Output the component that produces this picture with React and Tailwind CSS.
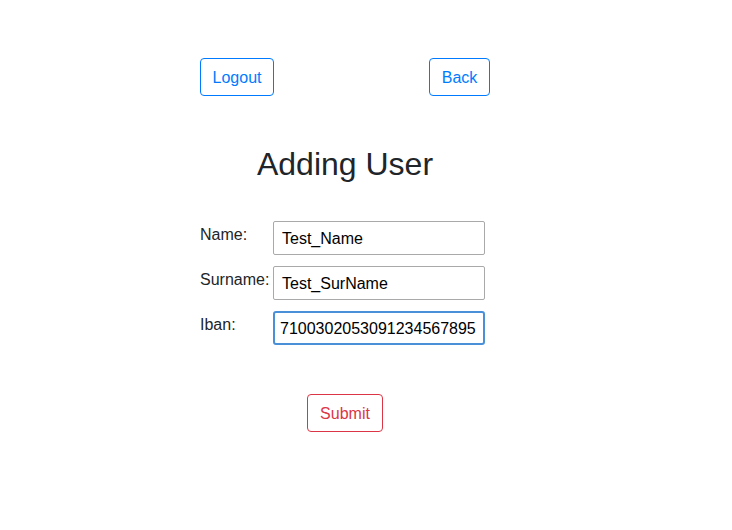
export default function App() {
    const rows = [
        { label: 'Name:', value: 'Test_Name' },
        { label: 'Surname:', value: 'Test_SurName' },
    ];

    return (
        <div className="min-h-[530px] bg-white pl-[200px] pt-[58px] text-[#212529]" style={{ fontFamily: '"Liberation Sans", Arial, sans-serif' }}>
            <div className="w-[290px]">

                {/* Top buttons */}
                <div className="flex justify-between">
                    <button className="w-[74px] h-[38px] pt-[2px] border border-[#007bff] rounded text-base text-[#007bff]">
                        Logout
                    </button>
                    <button className="w-[61px] h-[38px] pt-[2px] border border-[#007bff] rounded text-base text-[#007bff]">
                        Back
                    </button>
                </div>

                {/* Title */}
                <h2 className="mt-[49px] text-center text-[32px] leading-[1.2] font-normal">Adding User</h2>

                {/* Form */}
                <form className="mt-[38px] flex flex-col gap-[11px]">
                    {rows.map((row) => (
                        <div key={row.label} className="flex items-start">
                            <label className="w-[73px] pt-[2px] text-base leading-6">{row.label}</label>
                            <input
                                readOnly
                                value={row.value}
                                className="w-[212px] h-[34px] px-2 pt-[1px] border border-[#a9a9a9] rounded-[2px] text-base text-black outline-none"
                            />
                        </div>
                    ))}
                    <div className="flex items-start">
                        <label className="w-[73px] pt-[2px] text-base leading-6">Iban:</label>
                        <input
                            readOnly
                            value="7100302053091234567895"
                            className="w-[212px] h-[34px] pl-[5px] pr-1 pt-[1px] border-2 border-[#4a90d9] rounded-[3px] text-base text-black outline-none"
                        />
                    </div>

                    {/* Submit */}
                    <div className="mt-[38px] flex justify-center">
                        <button type="button" className="w-[76px] h-[38px] pt-[2px] border border-[#dc3545] rounded text-base text-[#dc3545]">
                            Submit
                        </button>
                    </div>
                </form>
            </div>
        </div>
    );
}
